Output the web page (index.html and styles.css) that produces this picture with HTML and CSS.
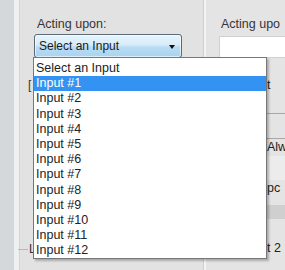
FILE: index.html
```html
<!DOCTYPE html>
<html>
<head>
<meta charset="utf-8">
<link rel="stylesheet" href="styles.css">
</head>
<body>
<div class="window">
  <div class="rail"></div>
  <div class="rail-light"></div>
  <div class="panel">
    <div class="label">Acting upon:</div>
    <div class="combo">
      <span class="combo-text">Select an Input</span>
      <span class="arrow"></span>
    </div>
    <div class="under">
      <div class="group-title first">[</div>
      <div class="group-title last"><span class="gline"></span>L</div>
    </div>
    <ul class="dropdown">
      <li>Select an Input</li>
      <li class="selected">Input #1</li>
      <li>Input #2</li>
      <li>Input #3</li>
      <li>Input #4</li>
      <li>Input #5</li>
      <li>Input #6</li>
      <li>Input #7</li>
      <li>Input #8</li>
      <li>Input #9</li>
      <li>Input #10</li>
      <li>Input #11</li>
      <li>Input #12</li>
    </ul>
  </div>
  <div class="divider"></div>
  <div class="panel2">
    <div class="label">Acting upo</div>
    <div class="field"></div>
    <div class="frags">
      <div class="frag f1">t</div>
      <div class="hline l1"></div>
      <div class="hline l2"></div>
      <div class="frag f2">Alw</div>
      <div class="band"></div>
      <div class="frag f3">pc</div>
      <div class="box"></div>
      <div class="frag f4">t 2</div>
    </div>
  </div>
</div>
</body>
</html>
```

FILE: styles.css
```css
* { box-sizing: border-box; }
html, body {
  margin: 0;
  padding: 0;
  width: 285px;
  height: 270px;
  overflow: hidden;
  background: #e3e3e3;
  font-family: "Liberation Sans", Arial, sans-serif;
  font-size: 12px;
  color: #262626;
}
.window {
  display: flex;
  height: 270px;
  overflow: hidden;
}
.rail {
  width: 14px;
  background: #d5d8db;
  flex: none;
}
.rail-light {
  width: 5px;
  background: #eef0f1;
  flex: none;
}
.panel {
  position: relative;
  width: 184px;
  flex: none;
  padding: 17px 0 0 14px;
  background: #e2e2e2;
  border-left: 1px solid #d4d4d4;
}
.label {
  font-size: 12.5px;
  line-height: 14px;
  height: 17px;
  padding-left: 3px;
  color: #353535;
}
.combo {
  width: 148px;
  height: 24px;
  border: 1px solid #5a6a78;
  border-radius: 3px;
  background: linear-gradient(#e8f4fc 0%, #d6ecfa 45%, #b9dcf3 55%, #a9d3f0 100%);
  box-shadow: inset 0 0 0 1px rgba(255,255,255,0.6);
  display: flex;
  align-items: center;
  justify-content: space-between;
  padding: 0 6px 0 4px;
}
.combo-text {
  color: #1a1a1a;
}
.arrow {
  width: 0;
  height: 0;
  border-left: 3.5px solid transparent;
  border-right: 3.5px solid transparent;
  border-top: 4px solid #111;
  margin-top: 1px;
}
.under {
  height: 200px;
}
.group-title {
  font-size: 12px;
  line-height: 12px;
  height: 12px;
  color: #333;
  display: flex;
  align-items: center;
}
.group-title.first {
  margin: 21px 0 0 -6px;
}
.group-title.last {
  margin: 152px 0 0 -16px;
}
.gline {
  width: 10px;
  height: 1px;
  background: #b8b8b8;
  margin-right: 1px;
}
.dropdown {
  position: absolute;
  left: 13px;
  top: 57px;
  width: 234px;
  height: 202px;
  margin: 0;
  padding: 3px 0 0 0;
  list-style: none;
  background: #fff;
  border: 1px solid #777;
  box-shadow: 2px 2px 2px rgba(0,0,0,0.25);
  z-index: 2;
}
.dropdown li {
  height: 15.2px;
  line-height: 15px;
  padding-left: 2px;
  font-size: 12.5px;
  color: #222;
}
.dropdown li.selected {
  background: #3492f2;
  color: #fff;
}
.divider {
  width: 3px;
  flex: none;
  background: #f4f4f4;
  border-left: 1px solid #cfcfcf;
}
.panel2 {
  flex: 1;
  padding: 17px 0 0 15px;
  background: #e4e4e4;
  white-space: nowrap;
  overflow: hidden;
}
.panel2 .label {
  padding-left: 0;
  height: 19px;
}
.field {
  width: 80px;
  height: 22px;
  background: #fff;
  border: 1px solid #d0d0d0;
  margin-left: -2px;
}
.frags {
  display: flex;
  flex-direction: column;
  height: 190px;
  margin-left: -15px;
  padding-top: 20px;
}
.frag {
  flex: none;
  height: 14px;
  padding-left: 61px;
  font-size: 12.5px;
  line-height: 14px;
  color: #222;
}
.hline {
  flex: none;
  height: 1px;
  background: #a8a8a8;
  margin-left: 58px;
}
.l1 { margin-top: 21px; }
.l2 { margin-top: 24px; }
.f2 { margin-top: 1px; }
.band {
  flex: none;
  height: 24px;
  margin-top: 2px;
  background: #ececec;
  margin-left: 58px;
}
.f3 { margin-top: 1px; }
.box {
  flex: none;
  height: 14px;
  margin-top: 10px;
  margin-left: 58px;
  background: #cfcfcf;
}
.f4 { margin-top: 22px; }
```
